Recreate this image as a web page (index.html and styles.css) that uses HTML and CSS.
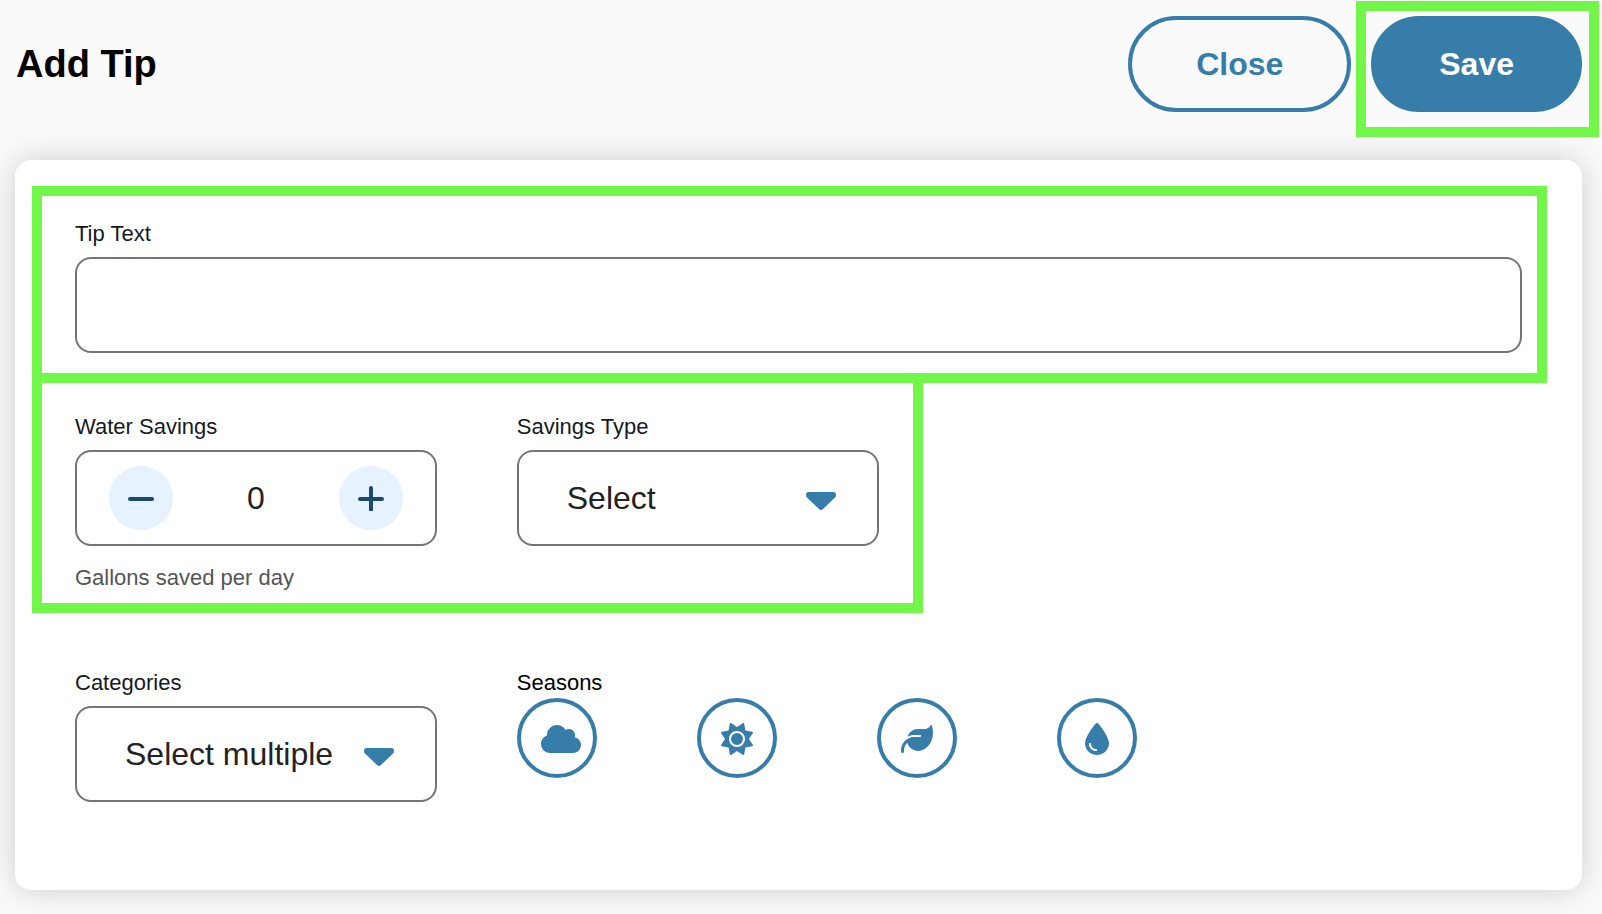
FILE: index.html
```html
<!DOCTYPE html>
<html lang="en">
<head>
<meta charset="utf-8">
<meta name="viewport" content="width=device-width, initial-scale=1">
<title>Add Tip</title>
<link rel="stylesheet" href="styles.css">
</head>
<body>
<header class="page-header">
  <h1 class="page-title">Add Tip</h1>
  <div class="actions">
    <button class="btn btn-outline" type="button">Close</button>
    <div class="highlight highlight-save">
      <button class="btn btn-primary" type="submit" form="tip-form">Save</button>
    </div>
  </div>
</header>
<main>
  <form class="card" id="tip-form">
    <div class="field highlight highlight-text">
      <label class="label" for="tip-text">Tip Text</label>
      <input class="control" id="tip-text" type="text">
    </div>

    <div class="savings highlight highlight-savings">
      <div class="field">
        <label class="label" for="water-savings">Water Savings</label>
        <div class="control stepper">
          <button class="step" type="button" aria-label="Decrease">
            <svg class="step-icon" viewBox="0 0 26 26"><path d="M2 14h22"/></svg>
          </button>
          <input class="step-value" id="water-savings" type="text" inputmode="numeric" value="0" aria-describedby="savings-hint">
          <button class="step" type="button" aria-label="Increase">
            <svg class="step-icon" viewBox="0 0 26 26"><path d="M2 14h22M13 3v22"/></svg>
          </button>
        </div>
        <p class="hint" id="savings-hint">Gallons saved per day</p>
      </div>
      <div class="field">
        <label class="label" for="savings-type">Savings Type</label>
        <div class="select-wrap">
          <select class="control select" id="savings-type"><option>Select</option></select>
          <svg class="caret" viewBox="0 0 30 18"><path d="M2.500 0h25Q30 0 30 3.200Q30 4.700 28.800 5.800L17 17Q15 18.800 13 17L1.200 5.800Q0 4.700 0 3.200Q0 0 2.500 0z"/></svg>
        </div>
      </div>
    </div>

    <div class="details">
      <div class="field">
        <label class="label" for="categories">Categories</label>
        <div class="select-wrap">
          <select class="control select" id="categories"><option>Select multiple</option></select>
          <svg class="caret" viewBox="0 0 30 18"><path d="M2.500 0h25Q30 0 30 3.200Q30 4.700 28.800 5.800L17 17Q15 18.800 13 17L1.200 5.800Q0 4.700 0 3.200Q0 0 2.500 0z"/></svg>
        </div>
      </div>
      <div role="group" aria-labelledby="seasons-label">
        <div class="label label-seasons" id="seasons-label">Seasons</div>
        <div class="seasons">
          <button class="season season-wide" type="button" aria-label="Winter">
            <svg class="season-icon" viewBox="0 0 640 512" width="40" height="32"><path d="M0 336c0 79.500 64.500 144 144 144H512c70.700 0 128-57.300 128-128c0-61.900-44-113.600-102.400-125.400c4.100-10.700 6.400-22.400 6.400-34.600c0-53-43-96-96-96c-19.700 0-38.100 6-53.300 16.200C367 64.200 315.300 32 256 32C167.600 32 96 103.600 96 192c0 2.700 .1 5.400 .2 8.100C40.200 219.800 0 273.200 0 336z"/></svg>
          </button>
          <button class="season" type="button" aria-label="Summer">
            <svg class="season-icon" viewBox="0 0 512 512" width="32" height="32"><path d="M361.500 1.200c5 2.100 8.600 6.600 9.600 11.900L391 121l107.900 19.800c5.300 1 9.800 4.600 11.900 9.600s1.500 10.700-1.600 15.200L446.900 256l62.300 90.300c3.100 4.500 3.700 10.200 1.600 15.200s-6.600 8.600-11.900 9.600L391 391 371.100 498.900c-1 5.300-4.600 9.800-9.600 11.900s-10.700 1.500-15.200-1.600L256 446.900l-90.300 62.300c-4.500 3.100-10.200 3.700-15.200 1.600s-8.600-6.600-9.600-11.900L121 391 13.100 371.100c-5.300-1-9.800-4.600-11.900-9.600s-1.500-10.700 1.600-15.200L65.100 256 2.800 165.700c-3.100-4.500-3.700-10.200-1.600-15.200s6.600-8.600 11.900-9.600L121 121 140.900 13.100c1-5.300 4.600-9.800 9.600-11.900s10.700-1.500 15.200 1.600L256 65.100 346.300 2.800c4.500-3.100 10.200-3.700 15.200-1.600zM160 256a96 96 0 1 1 192 0 96 96 0 1 1 -192 0zm224 0a128 128 0 1 0 -256 0 128 128 0 1 0 256 0z"/></svg>
          </button>
          <button class="season" type="button" aria-label="Fall">
            <svg class="season-icon" viewBox="0 0 512 512" width="32" height="32"><path d="M272 96c-78.600 0-145.100 51.500-167.700 122.500c33.600-17 71.500-26.500 111.700-26.500h88c8.800 0 16 7.200 16 16s-7.200 16-16 16H216c-16.600 0-32.700 1.900-48.300 5.400c-25.900 5.900-49.900 16.400-71.400 30.700C38.300 298.800 0 364.900 0 440v16c0 13.300 10.700 24 24 24s24-10.700 24-24V440c0-48.700 20.700-92.500 53.800-123.200C121.600 392.300 190.300 448 272 448l1 0c132.100-.7 239-130.900 239-291.400c0-42.600-7.500-83.100-21.100-119.600c-2.600-6.900-12.700-6.600-16.200-.1C455.900 72.100 418.700 96 376 96L272 96z"/></svg>
          </button>
          <button class="season" type="button" aria-label="Spring">
            <svg class="season-icon" viewBox="0 0 384 512" width="24" height="32"><path d="M192 512C86 512 0 426 0 320C0 228.800 130.200 57.700 166.600 11.700C172.600 4.200 181.500 0 191.100 0h1.800c9.600 0 18.500 4.200 24.500 11.700C253.800 57.700 384 228.800 384 320c0 106-86 192-192 192zM96 336c0-8.800-7.200-16-16-16s-16 7.200-16 16c0 61.900 50.100 112 112 112c8.800 0 16-7.200 16-16s-7.200-16-16-16c-44.200 0-80-35.800-80-80z"/></svg>
          </button>
        </div>
      </div>
    </div>
  </form>
</main>
</body>
</html>
```
FILE: styles.css
```css
:root {
  --blue: #377daa;
  --navy: #1b4b69;
  --line: #757575;
  --mark: #72f64a;
}

*, *::before, *::after { box-sizing: border-box; }

body {
  margin: 0;
  background: #fafafa;
  color: #000;
  font-family: "Liberation Sans", Arial, Helvetica, sans-serif;
}

button, input, select { font: inherit; }
button { cursor: pointer; }

.page-header {
  display: flex;
  align-items: center;
  justify-content: space-between;
  padding: 16px 20px 48px 16px;
}

.page-title {
  margin: 0;
  font-size: 38px;
  line-height: 48px;
}

.actions { display: flex; gap: 20px; }

.btn {
  height: 96px;
  padding: 0 64px;
  border: 4px solid var(--blue);
  border-radius: 48px;
  font-size: 32px;
  font-weight: 700;
}

.btn-outline { background: transparent; color: var(--blue); }
.btn-primary { background: var(--blue); color: #fff; }

.card {
  margin: 0 20px 24px 15px;
  padding: 59px 60px 88px;
  border-radius: 16px;
  background: #fff;
  box-shadow: 0 0 32px rgba(0, 0, 0, 0.18);
}

.highlight { position: relative; }

.highlight::after {
  content: "";
  position: absolute;
  border: 10px solid var(--mark);
  pointer-events: none;
}

.highlight-save::after { inset: -15px -17px -25px -15px; }
.highlight-text::after { inset: -33px -25px -30px -43px; }
.highlight-savings::after { inset: -39px -44px -19px -43px; }

.label {
  display: block;
  margin-bottom: 8px;
  color: #16191f;
  font-size: 22px;
  line-height: 30px;
}

.label-seasons { margin-bottom: 0; color: #000; }

.control {
  display: block;
  width: 100%;
  height: 96px;
  border: 2px solid var(--line);
  border-radius: 16px;
  background: #fff;
  color: #222;
  font-size: 32px;
}

input.control { padding: 0 32px; }

.savings {
  display: grid;
  grid-template-columns: repeat(2, minmax(0, 1fr));
  gap: 80px;
  width: calc(50% + 80px);
  margin-top: 59px;
}

.stepper {
  display: flex;
  align-items: center;
  justify-content: space-between;
  padding: 0 32px;
}

.step {
  display: grid;
  flex: none;
  place-items: center;
  width: 64px;
  height: 64px;
  padding: 0;
  border: 0;
  border-radius: 50%;
  background: #e6f2ff;
}

.step-icon {
  width: 26px;
  height: 26px;
  fill: none;
  stroke: var(--navy);
  stroke-width: 4;
  stroke-linecap: round;
}

.step-value {
  flex: 1;
  min-width: 0;
  padding: 0;
  border: 0;
  background: none;
  color: #222;
  text-align: center;
}

.hint {
  margin: 16px 0 0;
  color: #555;
  font-size: 22px;
  line-height: 32px;
}

.select-wrap { display: grid; align-items: center; }
.select-wrap > * { grid-area: 1 / 1; }

.select {
  padding: 0 48px;
  appearance: none;
}

.caret {
  justify-self: end;
  width: 30px;
  height: 18px;
  margin: 6px 43px 0 0;
  fill: var(--blue);
  pointer-events: none;
}

.details {
  display: grid;
  grid-template-columns: 25% 1fr;
  gap: 80px;
  margin-top: 74px;
}

.seasons { display: flex; flex-wrap: wrap; gap: 20px 100px; }

.season {
  display: flex;
  align-items: center;
  justify-content: center;
  width: 80px;
  height: 80px;
  padding: 2px 0 0;
  border: 4px solid var(--blue);
  border-radius: 50%;
  background: #fff;
}

.season-wide { padding-left: 8px; }
.season-icon { flex: none; fill: var(--blue); }
```
